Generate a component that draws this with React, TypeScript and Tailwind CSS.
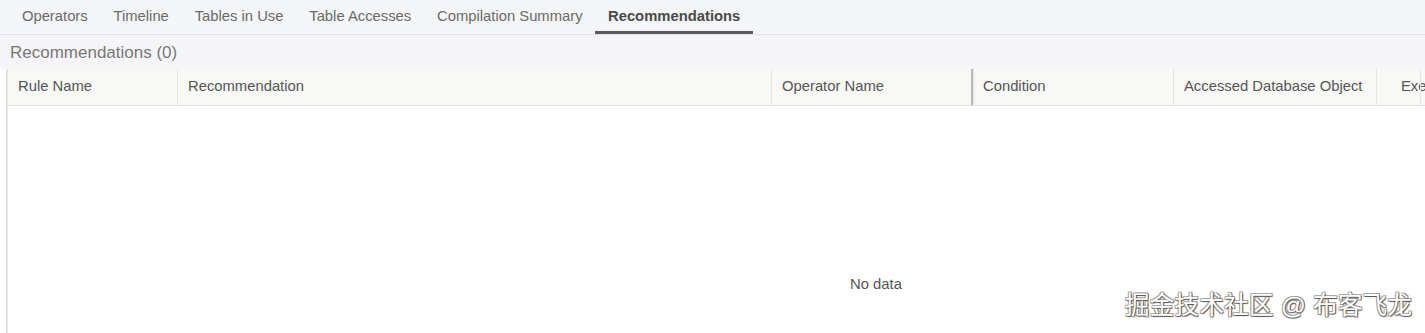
import React from "react";

const tabs = [
  "Operators",
  "Timeline",
  "Tables in Use",
  "Table Accesses",
  "Compilation Summary",
  "Recommendations",
];

const cols: { name: string; w: string; sep: string; pl: string }[] = [
  { name: "Rule Name", w: "w-[170px]", sep: "border-[#e6e6e4]", pl: "pl-[10px]" },
  { name: "Recommendation", w: "w-[594px]", sep: "border-[#e6e6e4]", pl: "pl-[10px]" },
  { name: "Operator Name", w: "w-[202px]", sep: "border-[#e6e6e4]", pl: "pl-[10px]" },
  { name: "Condition", w: "w-[203px]", sep: "border-[#e6e6e4]", pl: "pl-[10px]" },
  { name: "Accessed Database Object", w: "w-[203px]", sep: "border-[#e6e6e4]", pl: "pl-[10px]" },
  { name: "Execution Count", w: "w-[364px]", sep: "border-transparent", pl: "pl-[24px]" },
];

export default function App() {
  return (
    <div
      className="relative w-[1425px] h-[333px] overflow-hidden bg-white"
      style={{ fontFamily: '"Liberation Sans", Arial, sans-serif' }}
    >
      {/* Tab bar */}
      <div className="h-[35px] bg-[#f4f5f7] border-b border-[#e3e4e7] flex pl-[9px]">
        {tabs.map((t) => {
          const active = t === "Recommendations";
          return (
            <div
              key={t}
              className={
                active
                  ? "relative h-full px-[12.5px] flex items-center text-[14.8px] font-bold text-[#4a4a4a] border-b-[3px] border-[#5a5a5c] pt-[1px]"
                  : "h-full px-[12.9px] flex items-center text-[14.8px] text-[#6a6a6a] pb-[2px]"
              }
            >
              {t}
            </div>
          );
        })}
      </div>

      {/* Title area */}
      <div className="h-[34px] bg-[#f5f5f7] flex items-center pl-[10px] text-[17px] text-[#777777] pt-[1px]">
        Recommendations (0)
      </div>

      {/* Table */}
      <div className="ml-[6px] border-l-2 border-[#e2e2e2] w-[1760px]">
        <div className="h-[37px] bg-[#f8f8f6] border-b border-[#e2e2e0] flex">
          {cols.map((c, i) => (
            <div
              key={c.name}
              className={`${c.w} shrink-0 h-full flex items-center text-[14.8px] text-[#555555] ${c.pl} pb-[2px] border-r ${
                i === 3 ? "border-l-2 border-l-[#b9b9b9] -ml-[3px]" : ""
              } ${c.sep} whitespace-nowrap`}
            >
              {c.name}
            </div>
          ))}
        </div>
        <div className="h-[240px] w-[1736px] flex items-start justify-center pt-[167px] text-[14.8px] text-[#555555]">
          No data
        </div>
      </div>

      {/* Right edge line */}
      <div className="absolute top-[68px] right-[4px] h-[38px] w-px bg-[#e6e6e6]" />

      {/* Watermark */}
      <div
        className="absolute left-[1125px] top-[288px] text-[24.5px] text-white tracking-[0.3px] whitespace-nowrap"
        style={{
          fontFamily: '"Liberation Sans", "Noto Sans CJK SC", sans-serif',
          textShadow:
            "1px 1px 1px #555, -1px -1px 0 #aaa, 1px -1px 0 #999, -1px 1px 0 #999",
        }}
      >
        掘金技术社区 @ 布客飞龙
      </div>
    </div>
  );
}
